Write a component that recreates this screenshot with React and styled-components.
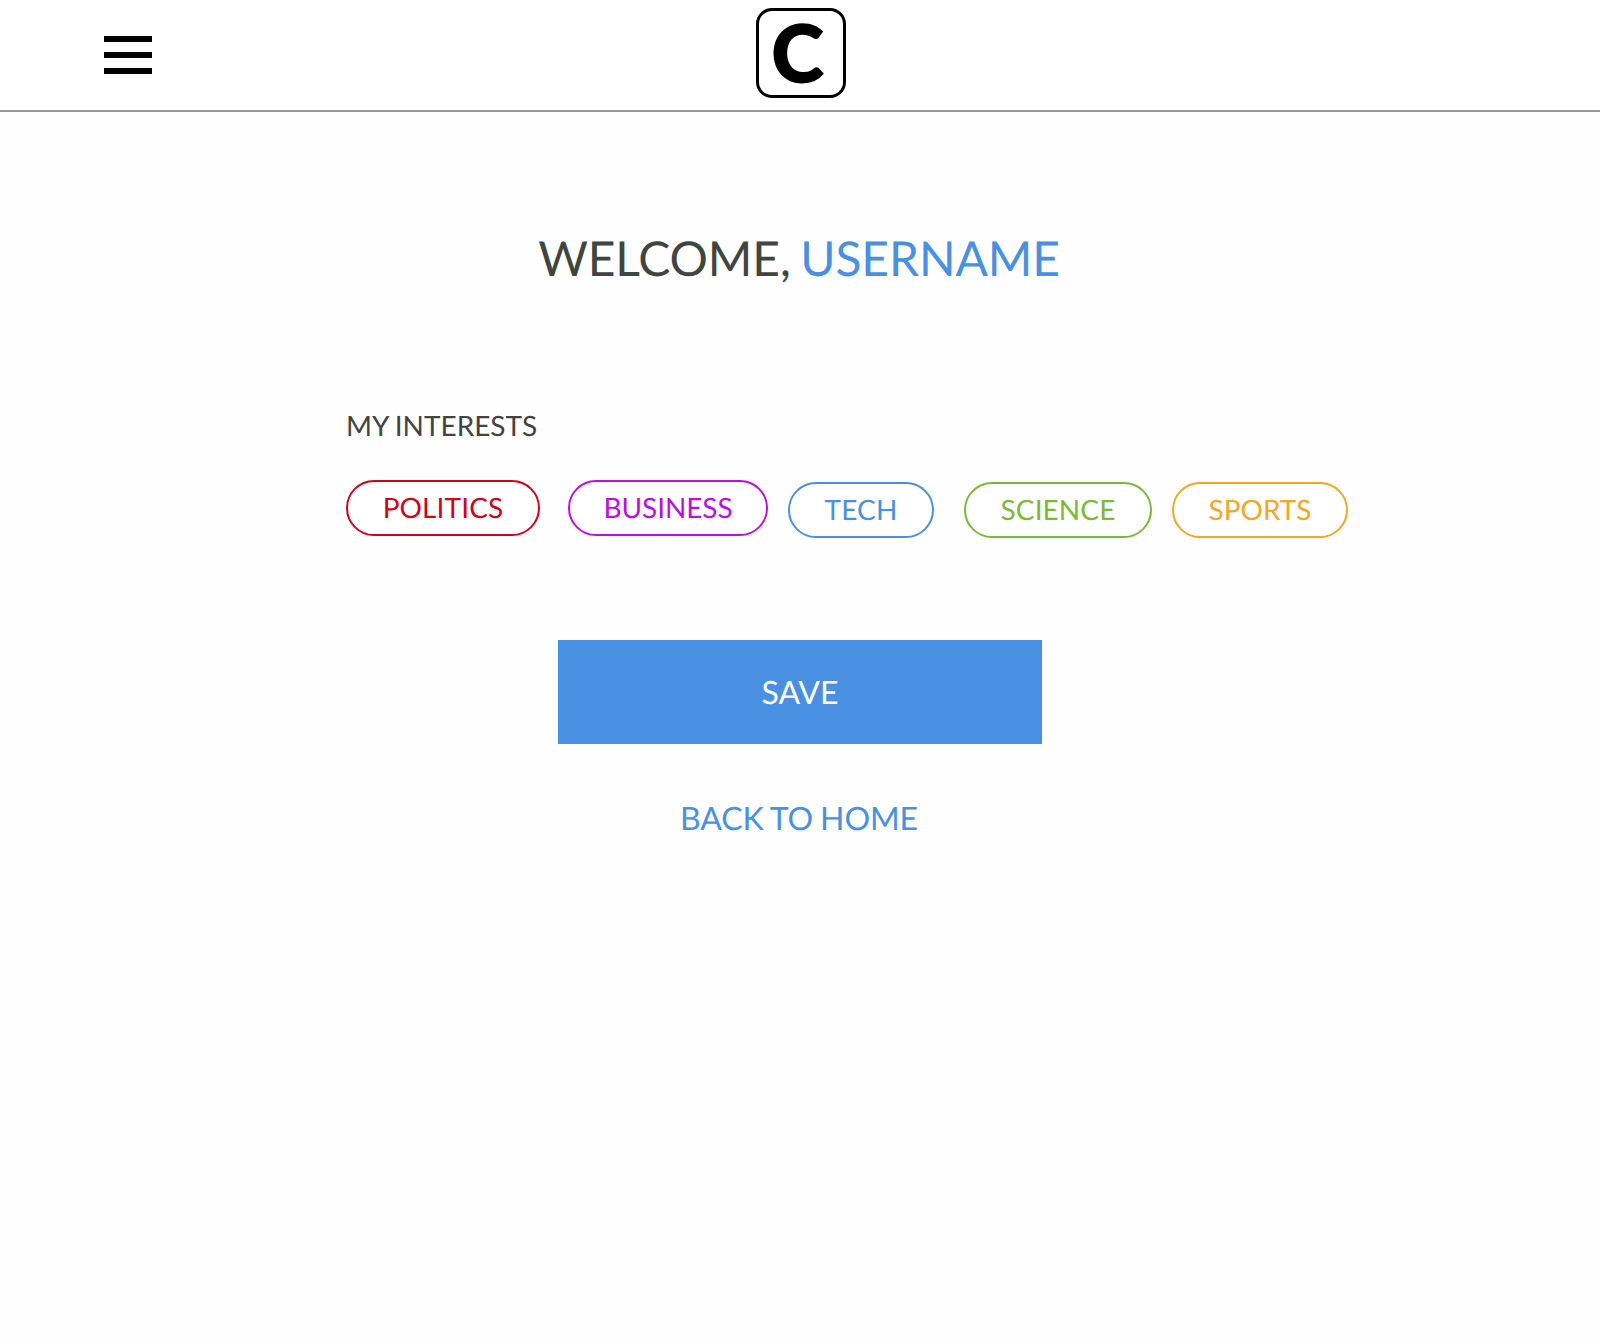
import React from "react";
import styled, { createGlobalStyle } from "styled-components";

const blue = "#4a90e2";
const ink = "#404540";

const GlobalStyle = createGlobalStyle`
  * { box-sizing: border-box; }
  body {
    margin: 0;
    background: #fefefe;
    color: ${ink};
    font-family: Lato, "Liberation Sans", sans-serif;
    text-rendering: geometricPrecision;
  }
`;

const Page = styled.div`
  min-height: 1344px;
  background: #fefefe;
`;

const Header = styled.header`
  display: grid;
  grid-template-columns: 756px 90px 1fr;
  align-items: start;
  height: 112px;
  padding-top: 8px;
  border-bottom: 2px solid #979797;
  background: #fff;
`;

const MenuButton = styled.button`
  display: flex;
  flex-direction: column;
  gap: 10px;
  width: 48px;
  margin: 28px 0 0 104px;
  padding: 0;
  border: 0;
  background: none;
  cursor: pointer;
`;

const MenuBar = styled.span`
  height: 6px;
  background: #000;
`;

const Logo = styled.a`
  display: flex;
  justify-content: center;
  width: 90px;
  height: 90px;
  padding-right: 7px;
  border: 3px solid #000;
  border-radius: 16px;
  background: #fff;
  color: #000;
  font-size: 79px;
  font-weight: 900;
  line-height: 82px;
  text-decoration: none;
  -webkit-text-stroke: 1.5px #000;
`;

const Main = styled.main`
  display: flex;
  flex-direction: column;
  align-items: center;
`;

const Title = styled.h1`
  margin: 118px 0 0;
  padding-right: 2px;
  font-size: 48px;
  font-weight: 400;
  line-height: 58px;
  letter-spacing: -0.12px;
  word-spacing: -2.6px;
`;

const Username = styled.span`
  color: ${blue};
`;

const Interests = styled.section`
  width: 1002px;
  margin: 120px 0 0 94px;
`;

const SectionTitle = styled.h2`
  margin: 0 0 38px;
  font-size: 28px;
  font-weight: 400;
  line-height: 34px;
  word-spacing: -0.8px;
`;

const Chips = styled.div`
  display: flex;
  height: 58px;
`;

const Chip = styled.button`
  flex: none;
  width: ${(p) => p.$width}px;
  height: 56px;
  margin: ${(p) => p.$drop || 0}px ${(p) => p.$gap || 0}px 0 0;
  padding: 0 0 2px;
  border: 2px solid ${(p) => p.$color};
  border-radius: 28px;
  background: #fff;
  color: ${(p) => p.$color};
  font: 400 28px/34px Lato, "Liberation Sans", sans-serif;
  letter-spacing: ${(p) => p.$tracking || 0}px;
  text-rendering: inherit;
  cursor: pointer;
`;

const SaveButton = styled.button`
  width: 484px;
  height: 104px;
  margin-top: 102px;
  padding: 0;
  border: 0;
  background: ${blue};
  color: #fff;
  font: 400 32px/38px Lato, "Liberation Sans", sans-serif;
  text-rendering: inherit;
  cursor: pointer;
`;

const HomeLink = styled.a`
  margin-top: 55px;
  padding-right: 2px;
  color: ${blue};
  font-size: 32px;
  line-height: 38px;
  letter-spacing: -0.06px;
  word-spacing: -1.2px;
  text-decoration: none;
`;

const interests = [
  { name: "POLITICS", color: "#d0021b", width: 194, gap: 28, drop: 0, tracking: 0.12 },
  { name: "BUSINESS", color: "#bd10e0", width: 200, gap: 20, drop: 0, tracking: -0.08 },
  { name: "TECH", color: "#4a90e2", width: 146, gap: 30, drop: 2, tracking: 0.15 },
  { name: "SCIENCE", color: "#7cb936", width: 188, gap: 20, drop: 2, tracking: 0.1 },
  { name: "SPORTS", color: "#f5a623", width: 176, gap: 0, drop: 2, tracking: 0 },
];

export default function App() {
  return (
    <Page>
      <GlobalStyle />
      <Header>
        <MenuButton aria-label="Menu">
          <MenuBar />
          <MenuBar />
          <MenuBar />
        </MenuButton>
        <Logo>C</Logo>
      </Header>
      <Main>
        <Title>
          WELCOME, <Username>USERNAME</Username>
        </Title>
        <Interests>
          <SectionTitle>MY INTERESTS</SectionTitle>
          <Chips>
            {interests.map((i) => (
              <Chip
                key={i.name}
                $color={i.color}
                $width={i.width}
                $gap={i.gap}
                $drop={i.drop}
                $tracking={i.tracking}
              >
                {i.name}
              </Chip>
            ))}
          </Chips>
        </Interests>
        <SaveButton>SAVE</SaveButton>
        <HomeLink>BACK TO HOME</HomeLink>
      </Main>
    </Page>
  );
}
